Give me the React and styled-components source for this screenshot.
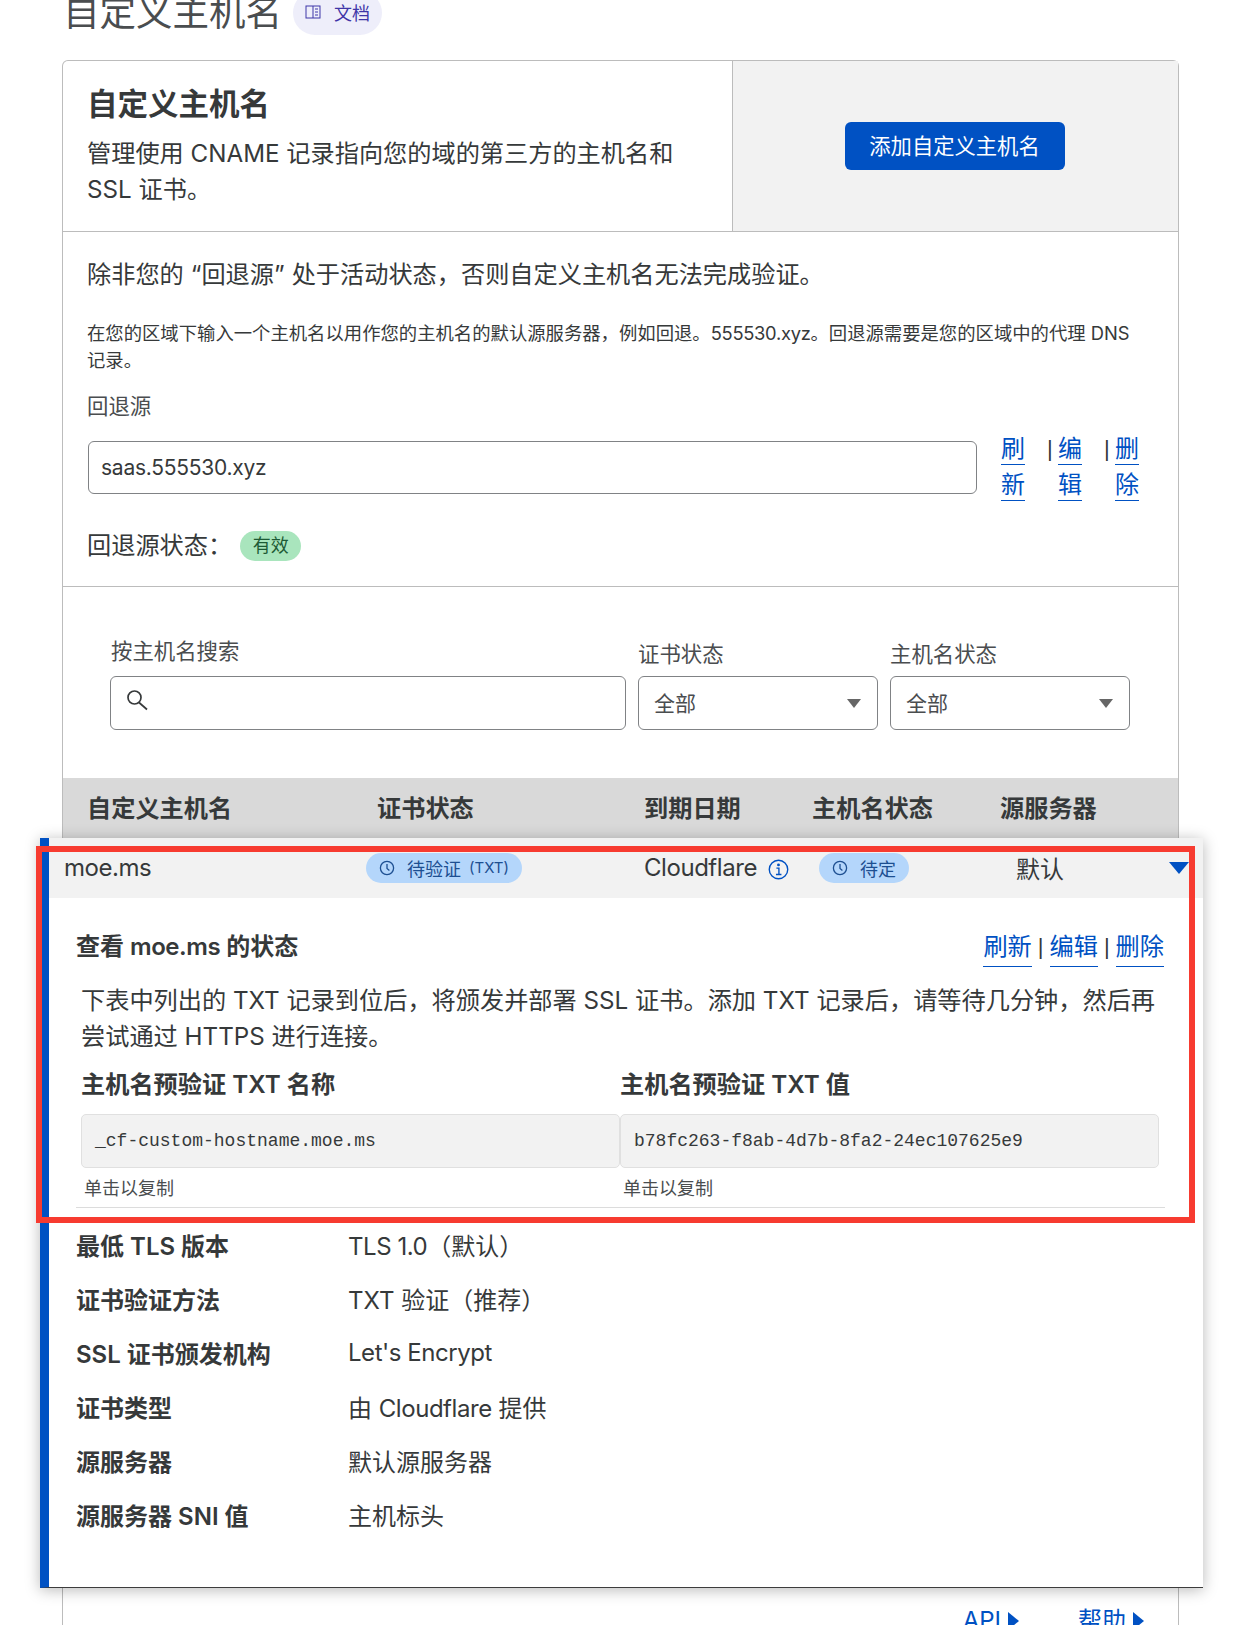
import styled, { createGlobalStyle } from "styled-components";

const GlobalStyle = createGlobalStyle`
  html, body {
    margin: 0;
    padding: 0;
    background: #fff;
  }
  body {
    font-family: Inter, "Noto Sans CJK SC", sans-serif;
    color: #36393a;
    text-spacing-trim: space-all;
  }
`;

const BLUE = "#0051c3";
const BODY_SIZE = "24.2px";

const BookIcon = () => (
  <svg width="16" height="16" viewBox="0 0 16 16" fill="none" stroke="#3f36a8" strokeWidth="1">
    <rect x="1" y="2" width="14" height="12" />
    <path d="M8 2v12M10 5h3M10 8h3M10 11h3" />
  </svg>
);

const SearchIcon = () => (
  <svg width="24" height="24" viewBox="0 0 24 24" fill="none" stroke="#36393a" strokeWidth="1.7">
    <circle cx="9.5" cy="8.5" r="6.5" />
    <path d="M14 13.5l8 7" />
  </svg>
);

const ClockIcon = () => (
  <svg width="16" height="16" viewBox="0 0 16 16" fill="none" stroke="#1d4f91" strokeWidth="1.3">
    <circle cx="8" cy="8" r="6.6" />
    <path d="M8 4v4.5l2.4 2" />
  </svg>
);

const InfoIcon = () => (
  <svg width="21" height="21" viewBox="0 0 20 20" fill="none" stroke={BLUE} strokeWidth="1.3">
    <circle cx="10" cy="10" r="8.8" />
    <path d="M8 8.7h2.4v6M7.6 14.8h5.2" />
    <circle cx="10" cy="5.6" r="0.7" fill={BLUE} />
  </svg>
);

const Page = styled.div`
  position: relative;
  width: 1242px;
  height: 1625px;
  overflow: hidden;
`;

const TitleRow = styled.div`
  display: flex;
  align-items: center;
  gap: 11px;
  margin: -9px 0 25px 63px;
  height: 44px;
`;

const PageTitle = styled.h1`
  margin: 0;
  font-size: 36.5px;
  font-weight: 400;
  line-height: 44px;
  color: #4a4d4f;
`;

const DocsPill = styled.a`
  display: flex;
  align-items: center;
  gap: 13px;
  height: 44px;
  box-sizing: border-box;
  padding: 0 12px 2px;
  border-radius: 22px;
  background: #eeeefa;
  color: #3f36a8;
  font-size: 18px;
`;

const Card = styled.section`
  margin: 0 63px 0 62px;
  border: 1.5px solid #bcbcbc;
  border-bottom: 0;
  border-radius: 6px 6px 0 0;
`;

const CardHead = styled.div`
  display: grid;
  grid-template-columns: 670px 1fr;
  height: 170px;
  border-bottom: 1.5px solid #bcbcbc;
`;

const HeadText = styled.div`
  padding: 23px 40px 0 24px;
  border-right: 1.5px solid #bcbcbc;
`;

const CardTitle = styled.h2`
  margin: 0 0 12px;
  font-size: 30.5px;
  font-weight: 600;
  line-height: 40px;
  color: #36393a;
`;

const Lead = styled.p`
  margin: 0;
  font-size: ${BODY_SIZE};
  line-height: 36px;
`;

const OpenQuote = styled.span`
  padding-left: 7px;
`;

const CloseQuote = styled.span`
  padding-right: 7px;
`;

const HeadAction = styled.div`
  display: flex;
  align-items: center;
  justify-content: center;
  background: #f2f2f2;
`;

const PrimaryButton = styled.button`
  width: 220px;
  height: 48px;
  margin-right: 2px;
  padding: 0 0 3px;
  border: 0;
  border-radius: 6px;
  background: ${BLUE};
  color: #fff;
  font-family: inherit;
  font-size: 21.3px;
`;

const FallbackSection = styled.div`
  height: 355px;
  box-sizing: border-box;
  padding: 25px 24px 0;
  border-bottom: 1.5px solid #bcbcbc;
`;

const Small = styled.p`
  margin: 27px 10px 17px 0;
  font-size: 18.35px;
  line-height: 27px;
`;

const FieldLabel = styled.label`
  display: block;
  padding-left: ${(p) => p.$inset || 0}px;
  font-size: 21.4px;
  line-height: 30px;
  margin-bottom: ${(p) => p.$gap || 10}px;
  color: #4a4d4f;
`;

const FallbackRow = styled.div`
  display: flex;
  align-items: center;
`;

const TextBox = styled.input`
  width: 889px;
  height: 53px;
  margin-left: 1px;
  box-sizing: border-box;
  padding: 0 12px;
  border: 1.5px solid #808285;
  border-radius: 6px;
  color: #36393a;
  font-family: inherit;
  font-size: 21px;
  letter-spacing: -0.25px;
`;

const StackLinks = styled.div`
  display: flex;
  align-items: flex-start;
  margin-left: 24px;
  font-size: 24px;
  line-height: 36px;
`;

const StackCell = styled.div`
  width: 25px;
`;

const Link = styled.a`
  color: ${BLUE};
  border-bottom: 1.5px solid ${BLUE};
  padding-bottom: 1px;
`;

const Pipe = styled.span`
  font-family: "Liberation Sans", sans-serif;
  font-size: 22px;
  color: #36393a;
`;

const StackPipe = styled(Pipe)`
  width: 11px;
  margin-left: 21px;
`;

const StatusRow = styled.div`
  display: flex;
  align-items: center;
  gap: 8px;
  margin-top: 25px;
  font-size: ${BODY_SIZE};
  line-height: 36px;
`;

const ValidBadge = styled.span`
  display: flex;
  align-items: center;
  justify-content: center;
  width: 61px;
  height: 30px;
  box-sizing: border-box;
  padding-bottom: 1px;
  border-radius: 15px;
  background: #a9e5bd;
  color: #1d5a35;
  font-size: 18px;
`;

const Filters = styled.div`
  display: flex;
  align-items: flex-end;
  gap: 12.5px;
  height: 191px;
  box-sizing: border-box;
  padding: 0 0 48px 47px;
`;

const SearchField = styled.div`
  width: 515.5px;
`;

const SelectField = styled.div`
  width: 239.5px;
`;

const SearchBox = styled.div`
  display: flex;
  align-items: center;
  height: 54px;
  box-sizing: border-box;
  padding: 0 0 4px 14px;
  border: 1.5px solid #808285;
  border-radius: 6px;
`;

const SelectBox = styled.div`
  display: flex;
  align-items: center;
  justify-content: space-between;
  height: 54px;
  box-sizing: border-box;
  padding: 0 16px 3px 15px;
  border: 1.5px solid #808285;
  border-radius: 6px;
  font-size: 21px;
  color: #4a4d4f;
`;

const Caret = styled.i`
  width: 0;
  height: 0;
  margin-top: 3px;
  border-left: 7.5px solid transparent;
  border-right: 7.5px solid transparent;
  border-top: 9px solid #666;
`;

const TableHead = styled.div`
  display: grid;
  grid-template-columns: 290px 267px 168px 188px 1fr;
  align-items: center;
  height: 60px;
  box-sizing: border-box;
  padding: 0 0 3px 24px;
  background: #d9d9d9;
  font-size: ${BODY_SIZE};
  font-weight: 600;
`;

const Expanded = styled.div`
  position: relative;
  height: 750px;
  margin: 0 -25px 0 -23px;
  border-left: 9px solid ${BLUE};
  border-bottom: 1.5px solid #3c3c3c;
  box-sizing: border-box;
  background: #fff;
  box-shadow: 0 2px 14px rgba(0, 0, 0, 0.28);
`;

const DataRow = styled.div`
  display: grid;
  grid-template-columns: 302px 278px 175px 197px 153px 1fr;
  align-items: center;
  height: 60px;
  box-sizing: border-box;
  padding: 0 0 1px 15px;
  background: #f2f2f2;
  font-size: 24px;
`;

const Latin = styled.span`
  letter-spacing: ${(p) => p.$tight || "-0.45px"};
`;

const StateBadge = styled.span`
  display: inline-flex;
  align-items: center;
  gap: 12px;
  justify-self: start;
  height: 30px;
  padding: 0 13px;
  border-radius: 15px;
  background: #b4d6fb;
  color: #1d4f91;
  font-size: 18px;
`;

const BadgeNote = styled.small`
  margin-left: -4px;
  font-size: 15px;
`;

const Issuer = styled.span`
  display: flex;
  align-items: center;
  gap: 11px;

  svg {
    margin-top: 4px;
  }
`;

const RowCaret = styled.i`
  width: 0;
  height: 0;
  border-left: 10px solid transparent;
  border-right: 10px solid transparent;
  border-top: 12px solid ${BLUE};
`;

const Details = styled.div`
  padding: 31px 38px 0 27px;
`;

const DetailHead = styled.div`
  display: flex;
  justify-content: space-between;
  padding-right: 1px;
  font-size: ${BODY_SIZE};
  line-height: 36px;
`;

const DetailTitle = styled.h3`
  margin: 0;
  font-size: 24px;
  font-weight: 600;
  line-height: 36px;
`;

const InlineLinks = styled.div`
  display: flex;
  gap: 6px;
`;

const Paragraph = styled.p`
  margin: 16px 0 12px 5px;
  font-size: ${BODY_SIZE};
  line-height: 36px;
`;

const CopyGrid = styled.div`
  display: grid;
  grid-template-columns: 539px 539px;
  margin-left: 5px;
`;

const CopyTitle = styled.h4`
  margin: 0 0 11px;
  font-size: ${BODY_SIZE};
  font-weight: 600;
  line-height: 36px;
`;

const CopyBox = styled.div`
  display: flex;
  align-items: center;
  height: 54px;
  box-sizing: border-box;
  padding: 0 13px;
  border: 1px solid #e0e0e0;
  border-radius: 5px;
  background: #f2f2f2;
  font-family: "Liberation Mono", monospace;
  font-size: 18px;
  color: #36393a;
`;

const Hint = styled.div`
  margin: 8px 0 5px 3px;
  font-size: 18px;
  line-height: 26px;
  color: #4a4d4f;
`;

const Divider = styled.hr`
  margin: 0 0 9px;
  border: 0;
  border-top: 1.5px solid #dcdcdc;
`;

const InfoRow = styled.div`
  display: grid;
  grid-template-columns: 272px 1fr;
  align-items: center;
  height: 54px;
  font-size: 24px;
`;

const InfoKey = styled.b`
  font-weight: 600;
`;

const Footer = styled.div`
  display: flex;
  justify-content: flex-end;
  gap: 59px;
  padding: 15px 34px 0 0;
  font-size: 24px;
  line-height: 36px;
`;

const FooterLink = styled.a`
  display: flex;
  align-items: center;
  gap: 7px;
  color: ${BLUE};
`;

const RightArrow = styled.i`
  width: 0;
  height: 0;
  border-top: 9px solid transparent;
  border-bottom: 9px solid transparent;
  border-left: 11px solid ${BLUE};
`;

const Highlight = styled.div`
  position: absolute;
  left: 36px;
  top: 846px;
  width: 1159px;
  height: 377px;
  box-sizing: border-box;
  border: 6px solid #f73b30;
  pointer-events: none;
`;

const info = [
  ["最低 TLS 版本", <><Latin>TLS 1.0</Latin>（默认）</>],
  ["证书验证方法", "TXT 验证（推荐）"],
  ["SSL 证书颁发机构", <Latin>Let's Encrypt</Latin>],
  ["证书类型", <>由 <Latin>Cloudflare</Latin> 提供</>],
  ["源服务器", "默认源服务器"],
  ["源服务器 SNI 值", "主机标头"],
];

export default function App() {
  return (
    <Page>
      <GlobalStyle />
      <TitleRow>
        <PageTitle>自定义主机名</PageTitle>
        <DocsPill>
          <BookIcon />
          文档
        </DocsPill>
      </TitleRow>

      <Card>
        <CardHead>
          <HeadText>
            <CardTitle>自定义主机名</CardTitle>
            <Lead>管理使用 CNAME 记录指向您的域的第三方的主机名和 SSL 证书。</Lead>
          </HeadText>
          <HeadAction>
            <PrimaryButton>添加自定义主机名</PrimaryButton>
          </HeadAction>
        </CardHead>

        <FallbackSection>
          <Lead>
            除非您的<OpenQuote>“</OpenQuote>回退源<CloseQuote>”</CloseQuote>处于活动状态，否则自定义主机名无法完成验证。
          </Lead>
          <Small>
            在您的区域下输入一个主机名以用作您的主机名的默认源服务器，例如回退。<Latin $tight="-0.3px">555530.xyz</Latin>。回退源需要是您的区域中的代理 DNS 记录。
          </Small>
          <FieldLabel>回退源</FieldLabel>
          <FallbackRow>
            <TextBox readOnly value="saas.555530.xyz" />
            <StackLinks>
              <StackCell>
                <Link>刷新</Link>
              </StackCell>
              <StackPipe>|</StackPipe>
              <StackCell>
                <Link>编辑</Link>
              </StackCell>
              <StackPipe>|</StackPipe>
              <StackCell>
                <Link>删除</Link>
              </StackCell>
            </StackLinks>
          </FallbackRow>
          <StatusRow>
            回退源状态：
            <ValidBadge>有效</ValidBadge>
          </StatusRow>
        </FallbackSection>

        <Filters>
          <SearchField>
            <FieldLabel $gap={10} $inset={1}>按主机名搜索</FieldLabel>
            <SearchBox>
              <SearchIcon />
            </SearchBox>
          </SearchField>
          <SelectField>
            <FieldLabel $gap={7}>证书状态</FieldLabel>
            <SelectBox>
              全部
              <Caret />
            </SelectBox>
          </SelectField>
          <SelectField>
            <FieldLabel $gap={7}>主机名状态</FieldLabel>
            <SelectBox>
              全部
              <Caret />
            </SelectBox>
          </SelectField>
        </Filters>

        <TableHead>
          <span>自定义主机名</span>
          <span>证书状态</span>
          <span>到期日期</span>
          <span>主机名状态</span>
          <span>源服务器</span>
        </TableHead>

        <Expanded>
          <DataRow>
            <Latin>moe.ms</Latin>
            <StateBadge>
              <ClockIcon />
              待验证 <BadgeNote>(TXT)</BadgeNote>
            </StateBadge>
            <Issuer>
              <Latin>Cloudflare</Latin>
              <InfoIcon />
            </Issuer>
            <StateBadge>
              <ClockIcon />
              待定
            </StateBadge>
            <span>默认</span>
            <RowCaret />
          </DataRow>

          <Details>
            <DetailHead>
              <DetailTitle>查看 <Latin>moe.ms</Latin> 的状态</DetailTitle>
              <InlineLinks>
                <Link>刷新</Link>
                <Pipe>|</Pipe>
                <Link>编辑</Link>
                <Pipe>|</Pipe>
                <Link>删除</Link>
              </InlineLinks>
            </DetailHead>
            <Paragraph>
              下表中列出的 TXT 记录到位后，将颁发并部署 SSL 证书。添加 TXT 记录后，请等待几分钟，然后再尝试通过 HTTPS 进行连接。
            </Paragraph>
            <CopyGrid>
              <div>
                <CopyTitle>主机名预验证 TXT 名称</CopyTitle>
                <CopyBox>_cf-custom-hostname.moe.ms</CopyBox>
                <Hint>单击以复制</Hint>
              </div>
              <div>
                <CopyTitle>主机名预验证 TXT 值</CopyTitle>
                <CopyBox>b78fc263-f8ab-4d7b-8fa2-24ec107625e9</CopyBox>
                <Hint>单击以复制</Hint>
              </div>
            </CopyGrid>
            <Divider />
            {info.map(([key, value]) => (
              <InfoRow key={key}>
                <InfoKey>{key}</InfoKey>
                <span>{value}</span>
              </InfoRow>
            ))}
          </Details>
        </Expanded>

        <Footer>
          <FooterLink>
            API
            <RightArrow />
          </FooterLink>
          <FooterLink>
            帮助
            <RightArrow />
          </FooterLink>
        </Footer>
      </Card>

      <Highlight />
    </Page>
  );
}
